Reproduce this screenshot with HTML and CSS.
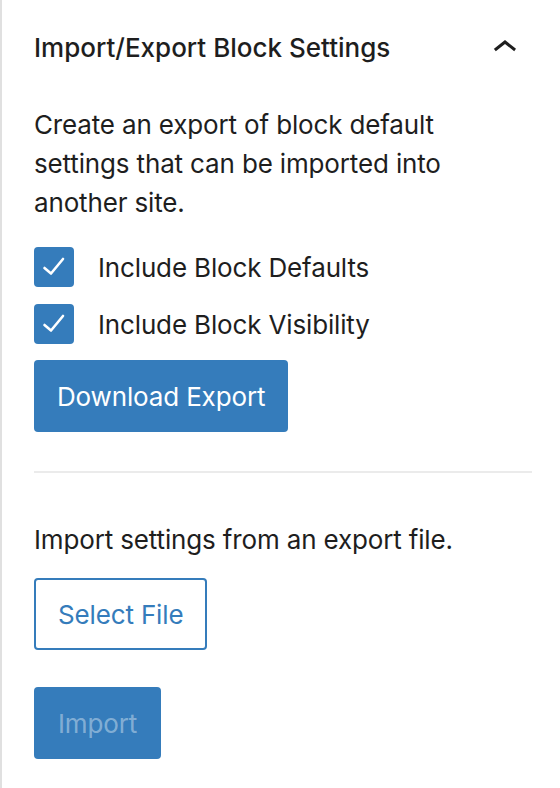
FILE: index.html
```html
<!DOCTYPE html>
<html>
<head>
<meta charset="utf-8">
<link rel="stylesheet" href="styles.css">
</head>
<body>
<div class="panel">
  <div class="panel-header">
    <h2 class="panel-title">Import/Export Block Settings</h2>
    <svg class="chevron" viewBox="0 0 24 24" width="48" height="48"><path d="M6.5 12.4L12 8l5.5 4.4-.9 1.2L12 10l-4.6 3.6-1-1.2z" fill="#1e1e1e"/></svg>
  </div>
  <div class="panel-body">
    <p class="desc">Create an export of block default settings that can be imported into another site.</p>
    <div class="checks">
      <label class="check-row">
        <span class="box"><svg viewBox="0 0 40 40" width="40" height="40"><polyline points="10.5,21 17,26.5 29,12" fill="none" stroke="#fff" stroke-width="2.6" stroke-linecap="round" stroke-linejoin="round"/></svg></span>
        <span class="check-label">Include Block Defaults</span>
      </label>
      <label class="check-row">
        <span class="box"><svg viewBox="0 0 40 40" width="40" height="40"><polyline points="10.5,21 17,26.5 29,12" fill="none" stroke="#fff" stroke-width="2.6" stroke-linecap="round" stroke-linejoin="round"/></svg></span>
        <span class="check-label">Include Block Visibility</span>
      </label>
    </div>
    <button class="btn btn-primary btn-download">Download Export</button>
    <hr class="divider">
    <p class="import-desc">Import settings from an export file.</p>
    <button class="btn btn-secondary">Select File</button>
    <button class="btn btn-primary btn-disabled">Import</button>
  </div>
</div>
</body>
</html>
```
FILE: styles.css
```css
html, body {
  margin: 0;
  padding: 0;
  background: #fff;
}
body {
  font-family: Inter, "Noto Sans", sans-serif;
  color: #1e1e1e;
  width: 560px;
  height: 788px;
  overflow: hidden;
  letter-spacing: -0.15px;
}
.panel {
  border-left: 2px solid #e0e0e0;
  height: 788px;
  box-sizing: border-box;
}
.panel-header {
  display: flex;
  align-items: center;
  justify-content: space-between;
  height: 95px;
  padding: 0 31px 0 32px;
}
.panel-title {
  margin: 0;
  font-size: 26px;
  font-weight: 500;
  line-height: 39px;
  letter-spacing: 0;
}
.chevron {
  display: block;
}
.panel-body {
  padding: 10px 28px 0 32px;
  display: flex;
  flex-direction: column;
  align-items: flex-start;
}
.desc, .import-desc {
  margin: 0;
  font-size: 26px;
  line-height: 39px;
}
.checks {
  margin-top: 25px;
  display: flex;
  flex-direction: column;
  gap: 17px;
}
.check-row {
  display: flex;
  align-items: center;
  gap: 24px;
  font-size: 26px;
}
.box {
  width: 40px;
  height: 40px;
  border-radius: 4px;
  background: #357cbb;
  display: block;
}
.box svg { display: block; }
.btn {
  font-family: inherit;
  letter-spacing: inherit;
  font-size: 26px;
  height: 72px;
  padding: 0 24px;
  border-radius: 4px;
  border: none;
  cursor: pointer;
}
.btn-primary {
  background: #357cbb;
  color: #fff;
}
.btn-download {
  margin-top: 16px;
  padding: 0 23px;
}
.divider {
  align-self: stretch;
  border: none;
  border-top: 2px solid #ebebeb;
  margin: 39px 0 0 0;
}
.import-desc {
  margin-top: 47px;
}
.btn-secondary {
  margin-top: 19px;
  background: #fff;
  color: #357cbb;
  box-shadow: inset 0 0 0 2px #357cbb;
}
.btn-disabled {
  margin-top: 37px;
  color: rgba(255, 255, 255, 0.4);
}
```
